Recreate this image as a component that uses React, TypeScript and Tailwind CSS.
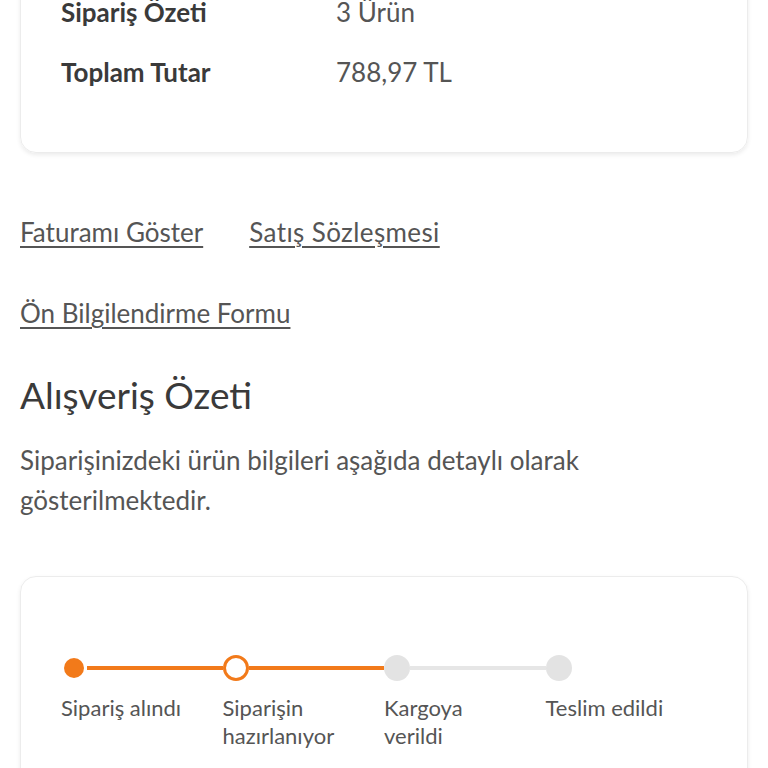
import React from 'react';

const steps = [
  { label: 'Sipariş alındı', state: 'done' },
  { label: 'Siparişin hazırlanıyor', state: 'current' },
  { label: 'Kargoya verildi', state: 'todo' },
  { label: 'Teslim edildi', state: 'todo' },
];

const Dot = ({ state }: { state: string }) => {
  if (state === 'done') {
    return (
      <div className="w-[26px] h-[26px] flex items-center justify-center shrink-0">
        <div className="w-[20px] h-[20px] rounded-full bg-[#f27a1a]" />
      </div>
    );
  }
  if (state === 'current') {
    return <div className="w-[26px] h-[26px] rounded-full border-[3px] border-[#f27a1a] bg-white shrink-0" />;
  }
  return <div className="w-[26px] h-[26px] rounded-full bg-[#e3e3e3] shrink-0" />;
};

export default function App() {
  return (
    <div className="bg-white min-h-screen px-5 font-['Lato',sans-serif] overflow-hidden">
      {/* Order summary card */}
      <div className="-mt-[47px] pt-[40px] pb-[62px] px-10 rounded-2xl border border-[#ececec] shadow-[0_2px_4px_rgba(0,0,0,0.08)] flex flex-col gap-6">
        <div className="flex text-[26px] leading-[36px]">
          <span className="w-[275px] font-bold text-[#3a3a3a]">Sipariş Özeti</span>
          <span className="text-[#555]">3 Ürün</span>
        </div>
        <div className="flex text-[26px] leading-[36px]">
          <span className="w-[275px] font-bold text-[#3a3a3a]">Toplam Tutar</span>
          <span className="text-[#555]">788,97 TL</span>
        </div>
      </div>

      {/* Links */}
      <div className="mt-[59px] flex flex-col gap-[41px] text-[26px] leading-[40px] text-[#555]">
        <div className="flex gap-[46px]">
          <a className="underline underline-offset-4">Faturamı Göster</a>
          <a className="underline underline-offset-4 tracking-[0.4px]">Satış Sözleşmesi</a>
        </div>
        <div>
          <a className="underline underline-offset-4">Ön Bilgilendirme Formu</a>
        </div>
      </div>

      <h2 className="mt-[40px] text-[37px] leading-[44px] font-normal text-[#3a3a3a]">Alışveriş Özeti</h2>
      <p className="mt-[23px] pr-[40px] text-[26px] leading-[40px] text-[#555]">
        Siparişinizdeki ürün bilgileri aşağıda detaylı olarak gösterilmektedir.
      </p>

      {/* Order status card */}
      <div className="mt-[56px] rounded-2xl border border-[#ececec] shadow-[0_2px_4px_rgba(0,0,0,0.08)] pt-[78px] pb-10 px-10">
        <div className="flex">
          {steps.map((s, i) => (
            <div key={s.label} className="w-[162px] flex flex-col">
              <div className="flex items-center">
                <Dot state={s.state} />
                {i < steps.length - 1 && (
                  <div className={`h-[4px] flex-1 ${s.state === 'todo' ? 'bg-[#e6e6e6]' : 'bg-[#f27a1a]'}`} />
                )}
              </div>
              <div className="mt-[13px] max-w-[130px] text-[22px] leading-[28px] text-[#555]">{s.label}</div>
            </div>
          ))}
        </div>
      </div>
    </div>
  );
}
